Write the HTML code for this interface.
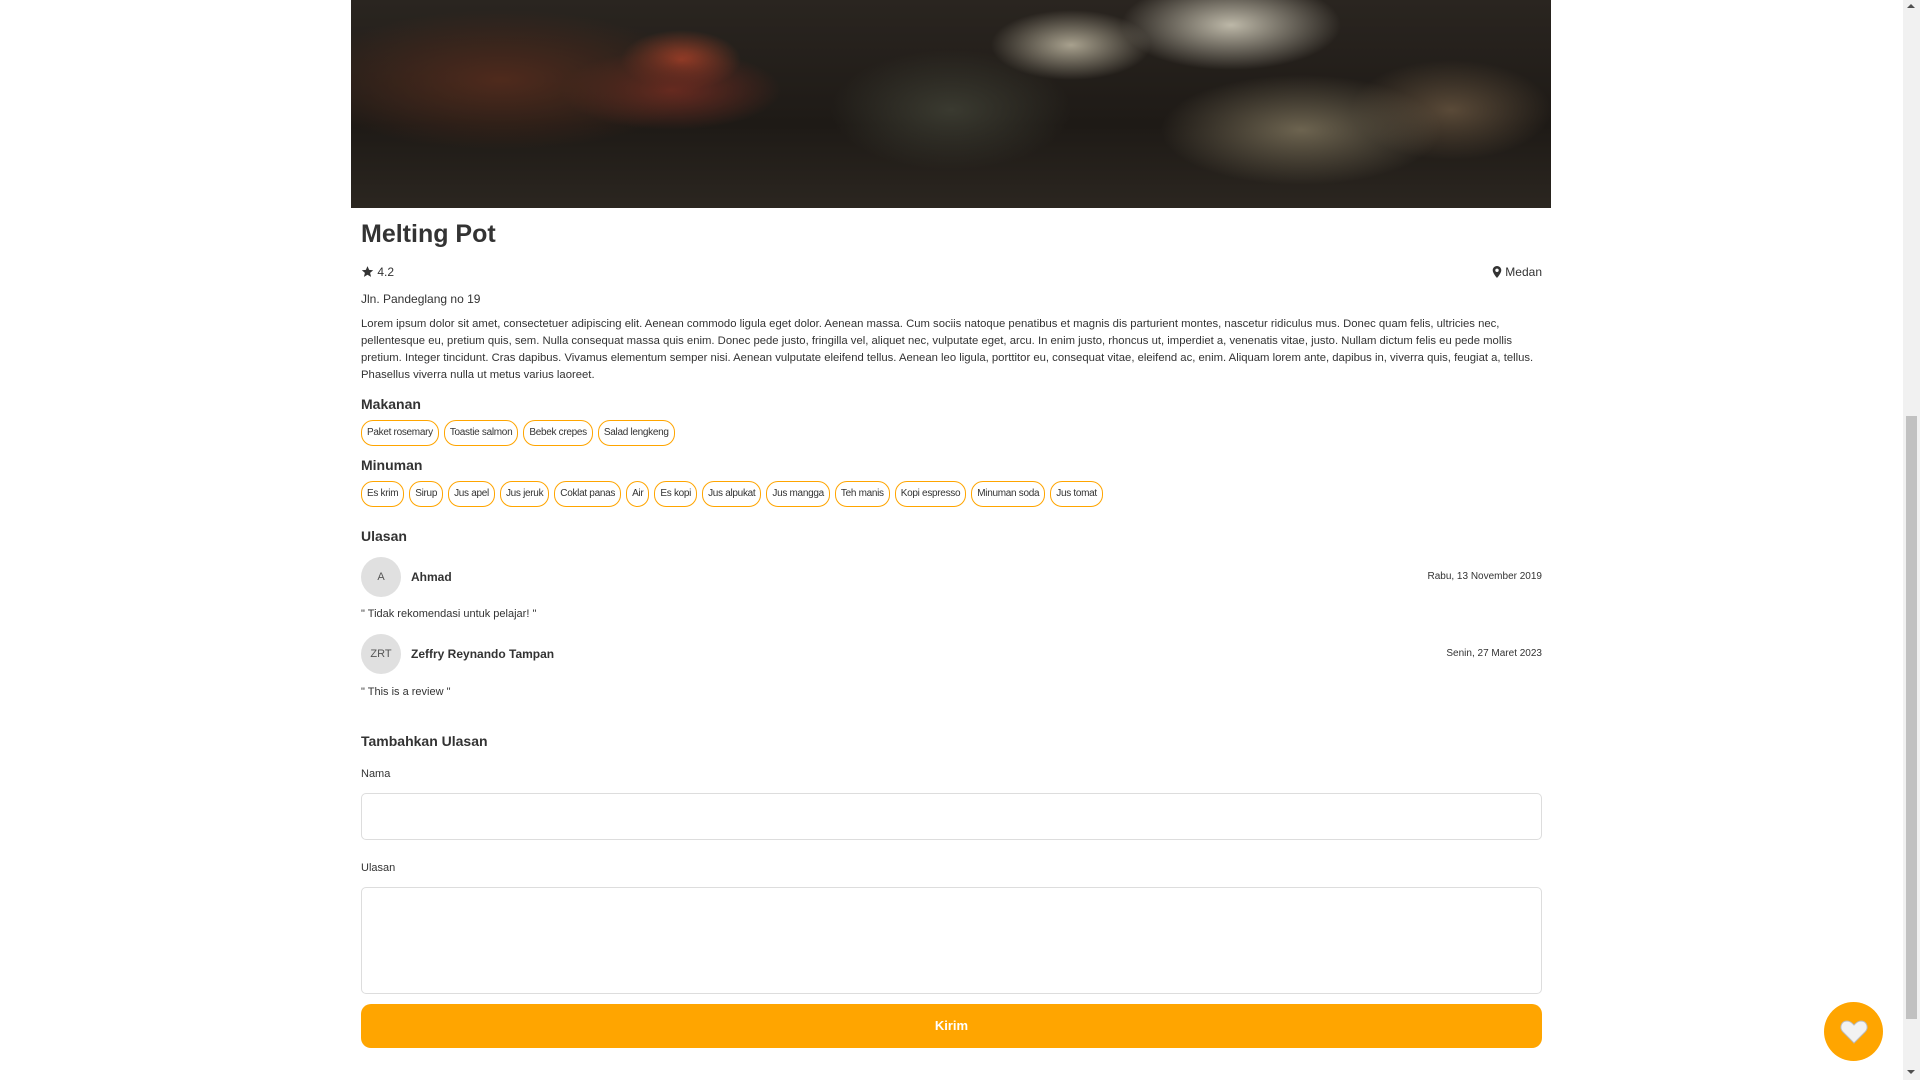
<!DOCTYPE html>
<html><head><meta charset="utf-8"><style>
*{box-sizing:border-box;margin:0;padding:0}
body{width:1920px;height:1080px;overflow:hidden;background:#fff;font-family:"Liberation Sans",sans-serif;color:#333;position:relative}
.img{position:absolute;left:351px;top:0;width:1200px;height:208px;background:
radial-gradient(ellipse 110px 45px at 880px 25px,#bdb8a8,transparent),
radial-gradient(ellipse 80px 35px at 720px 45px,#a8a18e,transparent),
radial-gradient(ellipse 140px 55px at 950px 130px,#6d6450,transparent),
radial-gradient(ellipse 200px 70px at 150px 80px,#4f2a1c,transparent),
radial-gradient(ellipse 110px 40px at 320px 90px,#6a2a20,transparent),
radial-gradient(ellipse 60px 30px at 330px 60px,#a04028,transparent),
radial-gradient(ellipse 120px 60px at 600px 110px,#3a3a30,transparent),
radial-gradient(ellipse 100px 50px at 1100px 110px,#5a4a38,transparent),
linear-gradient(180deg,#2a2520,#1e1a16 60%,#2b2620);}
.c{position:absolute;left:361px;width:1181px}
.t{font-size:12px;color:#333}
h1{font-size:25px;font-weight:bold;color:#333}
h3{font-size:14px;font-weight:bold;color:#333}
.chips{display:flex;gap:5px}
.chip{height:26px;border:1px solid #ffa500;border-radius:12px;padding:0 5px;font-size:10px;letter-spacing:-0.3px;line-height:24px;color:#333;white-space:nowrap}
.av{position:absolute;left:0;width:40px;height:40px;border-radius:50%;background:#e0e0e0;font-size:11px;text-align:center;line-height:40px;color:#555}
.nm{position:absolute;left:50px;font-size:12px;font-weight:bold;line-height:16px}
.dt{position:absolute;right:0;font-size:10px;line-height:14px}
.inp{position:absolute;left:361px;width:1181px;border:1px solid #ddd;border-radius:5px;background:#fff}
</style></head><body>
<div class="img"></div>
<div class="c" style="top:220px"><h1>Melting Pot</h1></div>
<div class="c t" style="top:264px;height:16px;line-height:16px">
<span style="display:inline-block;vertical-align:-2px"><svg width="13" height="13" viewBox="0 0 24 24"><path fill="#333" d="M12 2l3 7 7.5.6-5.7 5 1.8 7.4L12 18l-6.6 4 1.8-7.4-5.7-5L9 9z"/></svg></span> 4.2
<span style="position:absolute;right:0;top:0"><svg width="10" height="12" viewBox="0 0 10 14" style="vertical-align:-2px"><path fill="#333" d="M5 0C2.2 0 0 2.2 0 5c0 3.5 5 9 5 9s5-5.5 5-9C10 2.2 7.8 0 5 0zm0 7a2 2 0 110-4 2 2 0 010 4z"/></svg> Medan</span></div>
<div class="c t" style="top:291px;line-height:16px">Jln. Pandeglang no 19</div>
<div class="c t" style="top:316px;line-height:17px;font-size:11.3px">Lorem ipsum dolor sit amet, consectetuer adipiscing elit. Aenean commodo ligula eget dolor. Aenean massa. Cum sociis natoque penatibus et magnis dis parturient montes, nascetur ridiculus mus. Donec quam felis, ultricies nec, pellentesque eu, pretium quis, sem. Nulla consequat massa quis enim. Donec pede justo, fringilla vel, aliquet nec, vulputate eget, arcu. In enim justo, rhoncus ut, imperdiet a, venenatis vitae, justo. Nullam dictum felis eu pede mollis pretium. Integer tincidunt. Cras dapibus. Vivamus elementum semper nisi. Aenean vulputate eleifend tellus. Aenean leo ligula, porttitor eu, consequat vitae, eleifend ac, enim. Aliquam lorem ante, dapibus in, viverra quis, feugiat a, tellus. Phasellus viverra nulla ut metus varius laoreet.</div>
<div class="c" style="top:396px"><h3>Makanan</h3></div>
<div class="c chips" style="top:420px"><span class="chip">Paket rosemary</span><span class="chip">Toastie salmon</span><span class="chip">Bebek crepes</span><span class="chip">Salad lengkeng</span></div>
<div class="c" style="top:457px"><h3>Minuman</h3></div>
<div class="c chips" style="top:481px"><span class="chip">Es krim</span><span class="chip">Sirup</span><span class="chip">Jus apel</span><span class="chip">Jus jeruk</span><span class="chip">Coklat panas</span><span class="chip">Air</span><span class="chip">Es kopi</span><span class="chip">Jus alpukat</span><span class="chip">Jus mangga</span><span class="chip">Teh manis</span><span class="chip">Kopi espresso</span><span class="chip">Minuman soda</span><span class="chip">Jus tomat</span></div>
<div class="c" style="top:528px"><h3>Ulasan</h3></div>
<div class="c" style="top:557px;height:40px"><div class="av">A</div><div class="nm" style="top:12px">Ahmad</div><div class="dt" style="top:13px">Rabu, 13 November 2019</div></div>
<div class="c t" style="top:608px;font-size:11px">" Tidak rekomendasi untuk pelajar! "</div>
<div class="c" style="top:634px;height:40px"><div class="av">ZRT</div><div class="nm" style="top:12px">Zeffry Reynando Tampan</div><div class="dt" style="top:13px">Senin, 27 Maret 2023</div></div>
<div class="c t" style="top:686px;font-size:11px">" This is a review "</div>
<div class="c" style="top:733px"><h3>Tambahkan Ulasan</h3></div>
<div class="c t" style="top:768px;font-size:11px">Nama</div>
<div class="inp" style="top:793px;height:47px"></div>
<div class="c t" style="top:862px;font-size:11px">Ulasan</div>
<div class="inp" style="top:887px;height:107px"></div>
<div style="position:absolute;left:361px;top:1004px;width:1181px;height:44px;background:#ffa500;border-radius:10px;color:#fff;font-weight:bold;font-size:13px;text-align:center;line-height:44px">Kirim</div>
<div style="position:absolute;left:1824px;top:1002px;width:59px;height:59px;border-radius:50%;background:#ffa500;display:flex;align-items:center;justify-content:center"><svg width="28" height="24" viewBox="0 0 28 24"><path fill="#f2f2f2" stroke="#bbb" stroke-width="1" d="M14 23L3 12C-1 8 1 1 7 1c3 0 5 2 7 4 2-2 4-4 7-4 6 0 8 7 4 11z"/></svg></div>
<div style="position:absolute;left:1903px;top:0;width:17px;height:1080px;background:#f1f1f1"></div>
<div style="position:absolute;left:1906px;top:416px;width:11px;height:603px;background:#c1c1c1"></div>
<div style="position:absolute;left:1907px;top:4px;width:0;height:0;border-left:4px solid transparent;border-right:4px solid transparent;border-bottom:4px solid #505050"></div>
<div style="position:absolute;left:1907px;top:1070px;width:0;height:0;border-left:4px solid transparent;border-right:4px solid transparent;border-top:4px solid #505050"></div>
</body></html>
